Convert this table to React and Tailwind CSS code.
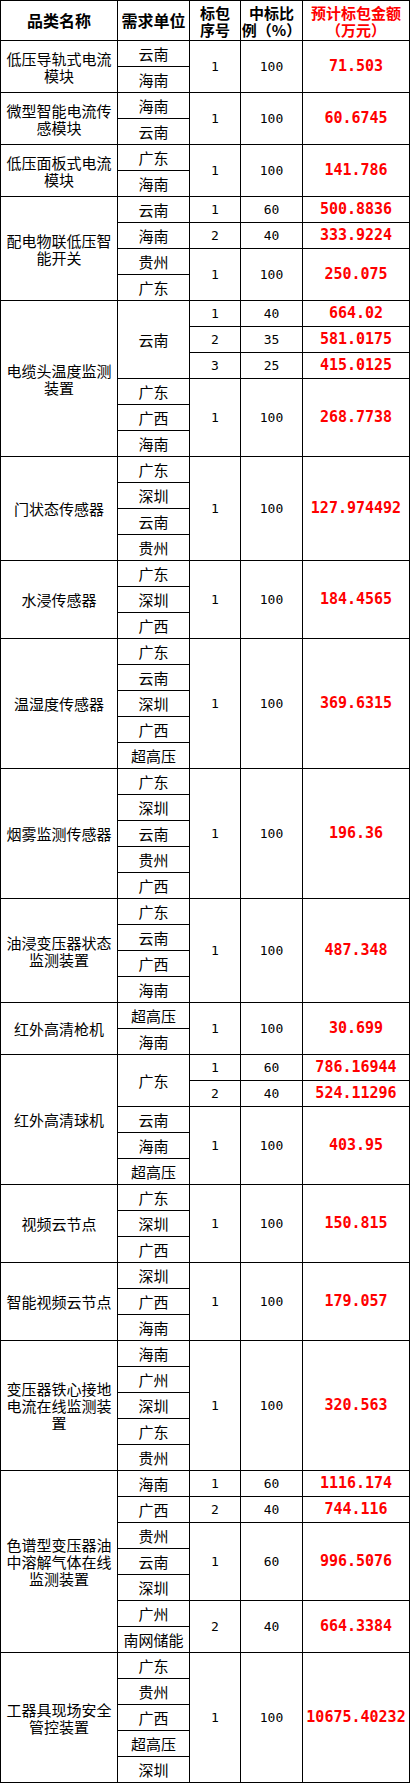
import React from "react";

const RS = {
  1: "row-span-1",
  2: "row-span-2",
  3: "row-span-3",
  4: "row-span-4",
  5: "row-span-5",
  6: "row-span-6",
  7: "row-span-7",
};

const base = "bg-white flex items-center justify-center text-center";
const cjk = "font-['Noto_Sans_CJK_SC',sans-serif]";
const mono = "font-['DejaVu_Sans_Mono',monospace]";

function Cat({ rs = 1, children }) {
  return (
    <div className={`${base} ${RS[rs]} ${cjk} text-[15px] leading-[17px] text-black`}>
      <span className="block w-full">{children}</span>
    </div>
  );
}
function U({ rs = 1, children }) {
  return (
    <div className={`${base} ${RS[rs]} ${cjk} text-[15px] leading-[17px] text-black`}>
      {children}
    </div>
  );
}
function N({ rs = 1, children }) {
  return (
    <div className={`${base} ${RS[rs]} ${mono} text-[13px] leading-[15px] text-black`}>
      {children}
    </div>
  );
}
function A({ rs = 1, children }) {
  return (
    <div className={`${base} ${RS[rs]} ${mono} text-[15px] leading-[17px] font-bold text-[#ff0000]`}>
      {children}
    </div>
  );
}

function simple(name, units, amt, no = "1", ratio = "100") {
  const n = units.length;
  const out = [
    <Cat key="c" rs={n}>{name}</Cat>,
    <U key="u0">{units[0]}</U>,
    <N key="n" rs={n}>{no}</N>,
    <N key="r" rs={n}>{ratio}</N>,
    <A key="a" rs={n}>{amt}</A>,
  ];
  for (let i = 1; i < n; i++) out.push(<U key={"u" + i}>{units[i]}</U>);
  return out;
}

function H2({ a, b, red }) {
  return (
    <div className={`${base} flex-col ${cjk} text-[15px] leading-[17px] font-bold ${red ? "text-[#ff0000]" : "text-black"}`}>
      <span className="block h-[17px] overflow-visible">{a}</span>
      <span className="block h-[17px] overflow-visible">{b}</span>
    </div>
  );
}

export default function App() {
  const H = `${base} ${cjk} text-[16px] leading-[17px] font-bold`;
  return (
    <div className="w-[410px] bg-white">
      <div className="grid w-[410px] grid-cols-[116px_71px_50px_61px_106px] grid-rows-[39px] auto-rows-[25px] gap-px bg-black p-px">
        <div className={`${H} text-black`}>品类名称</div>
        <div className={`${H} text-black`}>需求单位</div>
        <H2 a="标包" b="序号" />
        <H2 a="中标比" b="例（%）" />
        <H2 a="预计标包金额" b="（万元）" red />

        {simple("低压导轨式电流模块", ["云南", "海南"], "71.503")}
        {simple("微型智能电流传感模块", ["海南", "云南"], "60.6745")}
        {simple("低压面板式电流模块", ["广东", "海南"], "141.786")}

        <Cat rs={4}>配电物联低压智能开关</Cat>
        <U>云南</U>
        <N>1</N>
        <N>60</N>
        <A>500.8836</A>
        <U>海南</U>
        <N>2</N>
        <N>40</N>
        <A>333.9224</A>
        <U>贵州</U>
        <N rs={2}>1</N>
        <N rs={2}>100</N>
        <A rs={2}>250.075</A>
        <U>广东</U>

        <Cat rs={6}>电缆头温度监测装置</Cat>
        <U rs={3}>云南</U>
        <N>1</N>
        <N>40</N>
        <A>664.02</A>
        <N>2</N>
        <N>35</N>
        <A>581.0175</A>
        <N>3</N>
        <N>25</N>
        <A>415.0125</A>
        <U>广东</U>
        <N rs={3}>1</N>
        <N rs={3}>100</N>
        <A rs={3}>268.7738</A>
        <U>广西</U>
        <U>海南</U>

        {simple("门状态传感器", ["广东", "深圳", "云南", "贵州"], "127.974492")}
        {simple("水浸传感器", ["广东", "深圳", "广西"], "184.4565")}
        {simple("温湿度传感器", ["广东", "云南", "深圳", "广西", "超高压"], "369.6315")}
        {simple("烟雾监测传感器", ["广东", "深圳", "云南", "贵州", "广西"], "196.36")}
        {simple("油浸变压器状态监测装置", ["广东", "云南", "广西", "海南"], "487.348")}
        {simple("红外高清枪机", ["超高压", "海南"], "30.699")}

        <Cat rs={5}>红外高清球机</Cat>
        <U rs={2}>广东</U>
        <N>1</N>
        <N>60</N>
        <A>786.16944</A>
        <N>2</N>
        <N>40</N>
        <A>524.11296</A>
        <U>云南</U>
        <N rs={3}>1</N>
        <N rs={3}>100</N>
        <A rs={3}>403.95</A>
        <U>海南</U>
        <U>超高压</U>

        {simple("视频云节点", ["广东", "深圳", "广西"], "150.815")}
        {simple("智能视频云节点", ["深圳", "广西", "海南"], "179.057")}
        {simple("变压器铁心接地电流在线监测装置", ["海南", "广州", "深圳", "广东", "贵州"], "320.563")}

        <Cat rs={7}>色谱型变压器油中溶解气体在线监测装置</Cat>
        <U>海南</U>
        <N>1</N>
        <N>60</N>
        <A>1116.174</A>
        <U>广西</U>
        <N>2</N>
        <N>40</N>
        <A>744.116</A>
        <U>贵州</U>
        <N rs={3}>1</N>
        <N rs={3}>60</N>
        <A rs={3}>996.5076</A>
        <U>云南</U>
        <U>深圳</U>
        <U>广州</U>
        <N rs={2}>2</N>
        <N rs={2}>40</N>
        <A rs={2}>664.3384</A>
        <U>南网储能</U>

        {simple("工器具现场安全管控装置", ["广东", "贵州", "广西", "超高压", "深圳"], "10675.40232")}
      </div>
    </div>
  );
}
